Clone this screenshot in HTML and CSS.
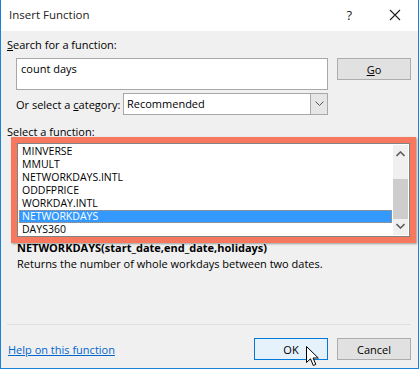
FILE: index.html
```html
<!DOCTYPE html>
<html lang="en">
<head>
    <meta charset="UTF-8">
    <title>Insert Function</title>
    <link rel="stylesheet" href="styles.css">
</head>
<body>
    <div class="window">
        <div class="titlebar">
            <span class="title">Insert Function</span>
            <span class="help">?</span>
            <svg class="close" width="12" height="12" viewBox="0 0 12 12">
                <path d="M1 1 L11 11 M11 1 L1 11" stroke="#222" stroke-width="1.1" fill="none"/>
            </svg>
        </div>

        <div class="content">
            <div class="label"><u>S</u>earch for a function:</div>
            <div class="search-row">
                <div class="search-box">count days</div>
                <button class="btn">
                    <u>G</u>o
                </button>
            </div>
            <div class="category-row">
                <span class="cat-label">Or select a <u>c</u>ategory:</span>
                <div class="select">
                    <span class="select-value">Recommended</span>
                    <span class="select-arrow">
                        <svg width="9" height="6" viewBox="0 0 9 6"><path d="M0.5 0.5 L4.5 4.5 L8.5 0.5" stroke="#555" fill="none"/></svg>
                    </span>
                </div>
            </div>

            <div class="label label-list">Select a functio<u>n</u>:</div>
            <div class="highlight">
                <div class="listbox">
                    <ul class="items">
                        <li>MINVERSE</li>
                        <li>MMULT</li>
                        <li>NETWORKDAYS.INTL</li>
                        <li>ODDFPRICE</li>
                        <li>WORKDAY.INTL</li>
                        <li class="selected">NETWORKDAYS</li>
                        <li>DAYS360</li>
                    </ul>
                    <div class="scrollbar">
                        <svg class="arrow" width="9" height="6" viewBox="0 0 9 6"><path d="M0.5 5 L4.5 1 L8.5 5" stroke="#606060" stroke-width="1.6" fill="none"/></svg>
                        <div class="track"><div class="thumb"></div></div>
                        <svg class="arrow" width="9" height="6" viewBox="0 0 9 6"><path d="M0.5 1 L4.5 5 L8.5 1" stroke="#606060" stroke-width="1.6" fill="none"/></svg>
                    </div>
                </div>
            </div>

            <div class="signature">NETWORKDAYS(start_date,end_date,holidays)</div>
            <div class="description">Returns the number of whole workdays between two dates.</div>

            <div class="footer">
                <a class="help-link" href="#">Help on this function</a>
                <div class="buttons">
                    <button class="btn btn-default">OK</button>
                    <button class="btn">Cancel</button>
                </div>
            </div>
        </div>

        <svg class="cursor" width="14" height="22" viewBox="0 0 14 22">
            <path d="M0.5 0.5 L0.5 16.5 L4.5 12.8 L7.3 19.5 L9.8 18.4 L7.1 12 L12.3 12 Z" fill="#fff" stroke="#000" stroke-width="1"/>
        </svg>
    </div>
</body>
</html>
```

FILE: styles.css
```css
* {
    box-sizing: border-box;
}
body {
    margin: 0;
    background-color: #fff;
    font-family: "Open Sans", "Noto Sans", sans-serif;
    font-size: 11px;
    color: #000;
}
.window {
    position: relative;
    width: 419px;
    height: 369px;
    border: 1px solid #1883d7;
    border-top: none;
    background-color: #f0f0f0;
    display: flex;
    flex-direction: column;
}
.titlebar {
    height: 31px;
    background-color: #fff;
    display: flex;
    align-items: center;
    padding-left: 8px;
    font-size: 11.5px;
    color: #222;
}
.title {
    flex: 1;
    margin-top: -2px;
}
.help {
    font-size: 13px;
    margin-right: 37px;
    margin-top: -2px;
}
.close {
    margin-right: 17px;
    margin-top: -1px;
}
.content {
    flex: 1;
    display: flex;
    flex-direction: column;
    padding: 6px 7px 8px 6px;
}
.label {
    line-height: 15px;
    height: 15px;
}
.search-row {
    display: flex;
    margin-top: 6px;
    padding-left: 9px;
}
.search-box {
    width: 312px;
    height: 32px;
    background-color: #fff;
    border: 1px solid #a8a8a8;
    padding: 2px 4px;
    line-height: 15px;
}
.btn {
    width: 74px;
    height: 22px;
    margin-left: 9px;
    padding: 0;
    background-color: #e1e1e1;
    border: 1px solid #adadad;
    font-family: inherit;
    font-size: 11px;
    color: #000;
}
.category-row {
    display: flex;
    align-items: center;
    margin-top: 3px;
    padding-left: 9px;
}
.cat-label {
    width: 107px;
}
.select {
    width: 205px;
    height: 22px;
    display: flex;
    border: 1px solid #a8a8a8;
    background-color: #fff;
}
.select-value {
    flex: 1;
    padding-left: 3px;
    line-height: 20px;
}
.select-arrow {
    width: 17px;
    background-color: #e6e6e6;
    border-left: 1px solid #a8a8a8;
    display: flex;
    align-items: center;
    justify-content: center;
}
.label-list {
    margin-top: 9px;
}
.highlight {
    margin-top: -2px;
    margin-left: 4px;
    width: 405px;
    border: 6px solid #f6795f;
    box-shadow: 1px 1px 2px rgba(0, 0, 0, 0.35);
}
.listbox {
    display: flex;
    height: 94px;
    border: 1px solid #828282;
    background-color: #fff;
}
.items {
    flex: 1;
    list-style: none;
    margin: 0;
    padding: 1px 0 0 1px;
    font-size: 10.5px;
}
.items li {
    height: 13px;
    line-height: 13px;
    padding-left: 3px;
}
.items .selected {
    background-color: #3399ff;
    color: #fff;
    outline: 1px dotted #d68a4c;
    outline-offset: -1px;
}
.scrollbar {
    width: 15px;
    margin: 1px;
    background-color: #f0f0f0;
    display: flex;
    flex-direction: column;
    align-items: center;
}
.arrow {
    margin: 6px 0;
}
.track {
    flex: 1;
    width: 100%;
    position: relative;
}
.thumb {
    position: absolute;
    left: 0;
    right: 0;
    top: 16px;
    height: 40px;
    background-color: #cdcdcd;
}
.signature {
    font-weight: bold;
    margin-top: -3px;
    padding-left: 10px;
    line-height: 15px;
}
.description {
    padding-left: 10px;
    margin-top: 1px;
    line-height: 15px;
    flex: 1;
}
.footer {
    display: flex;
    align-items: center;
    justify-content: space-between;
    border-top: 1px solid #dfdfdf;
    padding-top: 13px;
}
.help-link {
    color: #0066cc;
    margin-left: 1px;
}
.buttons {
    display: flex;
}
.btn-default {
    background-color: #e5f1fb;
    border-color: #0078d7;
}
.cursor {
    position: absolute;
    left: 305px;
    top: 346px;
}
```
